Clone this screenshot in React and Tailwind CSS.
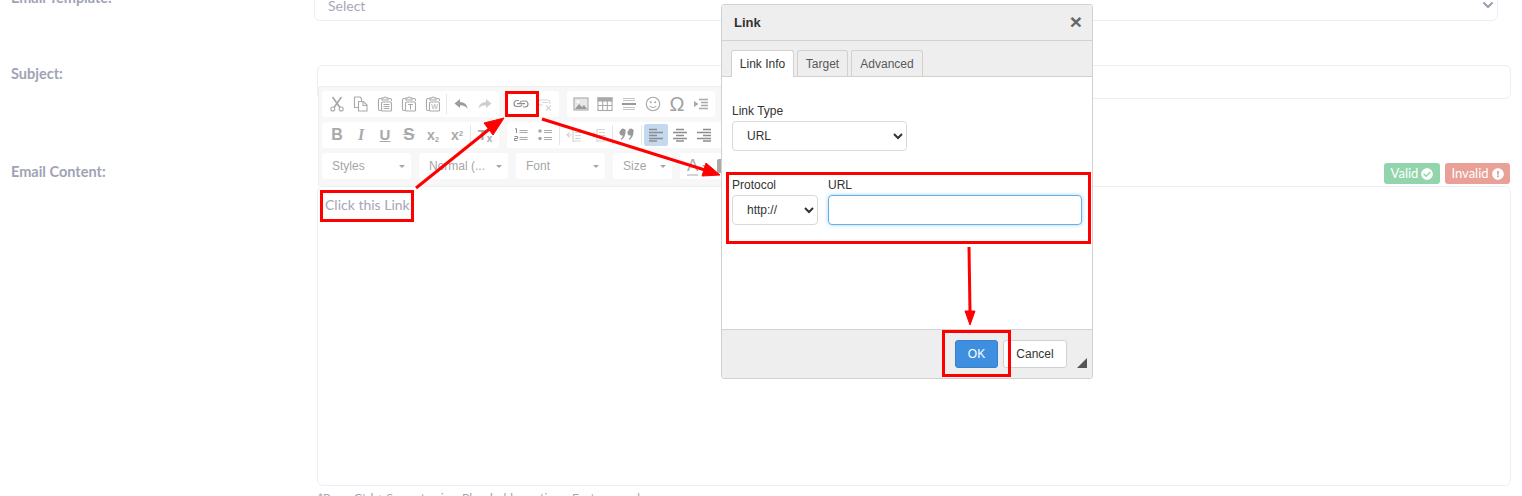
import { ChevronDown } from "lucide-react"
import { FaCheckCircle, FaExclamationCircle } from "react-icons/fa"

const ICON = "#a9a9a9"

function Svg({ children }) {
  return (
    <svg width="16" height="16" viewBox="0 0 16 16" fill="none" stroke={ICON} strokeWidth="1.1">
      {children}
    </svg>
  )
}

function Clipboard({ children }) {
  return (
    <Svg>
      <path d="M4.5 2.500H3a1.500 1.500 0 0 0-1.500 1.500v9A1.500 1.500 0 0 0 3 14.500h1" />
      <path d="M11.500 2.500H13A1.500 1.500 0 0 1 14.500 4v1" />
      <path d="M5 4V2h1.700a1.300 1 0 0 1 2.600 0H11v2z" fill="#fff" />
      <rect x="4.500" y="6" width="10" height="9" fill="#fff" rx="1" />
      {children}
    </Svg>
  )
}

const icons = {
  cut: (
    <Svg>
      <path d="M3.500 1l7.500 10.500M12.500 1L5 11.500" strokeWidth="1.700" />
      <circle cx="3.800" cy="13" r="2" />
      <circle cx="12.200" cy="13" r="2" />
    </Svg>
  ),
  copy: (
    <Svg>
      <path d="M5.500 11.500H1.500V1h5.500l1.500 1.500V5" />
      <path d="M5.500 5.500h5l3.500 3.500v6H5.500z" fill="#fff" />
      <path d="M10 5.500V9.500h4" />
    </Svg>
  ),
  paste: (
    <Clipboard>
      <path d="M6.500 8.500h6M6.500 10.500h6M6.500 12.500h6" />
    </Clipboard>
  ),
  pasteText: (
    <Clipboard>
      <path d="M7 8.500h5M9.500 8.500v5" />
    </Clipboard>
  ),
  pasteWord: (
    <Clipboard>
      <text x="9.500" y="13.300" textAnchor="middle" fontSize="7" fontFamily="Liberation Sans, sans-serif" fill={ICON} stroke="none">W</text>
    </Clipboard>
  ),
  undo: (
    <Svg>
      <path d="M7 3L1.500 7.500 7 12V9.200c3 0 5.500.6 7.500 3.300C14 8.500 11.500 6.300 7 6z" fill="#9c9c9c" stroke="none" />
    </Svg>
  ),
  redo: (
    <Svg>
      <path d="M9 3l5.500 4.500L9 12V9.200c-3 0-5.500.6-7.500 3.300C2 8.500 4.500 6.300 9 6z" fill="#cfcfcf" stroke="none" />
    </Svg>
  ),
  link: (
    <svg width="16" height="16" viewBox="0 0 16 16" fill="none" stroke="#8f8f8f" strokeWidth="1.200">
      <path d="M6 4.500H4a3 3 0 0 0 0 6h2.500a3 3 0 0 0 2.700-1.700" />
      <path d="M10 11h2a3 3 0 0 0 0-6H9.500a3 3 0 0 0-2.700 1.700" />
      <path d="M4 7.700h8" />
    </svg>
  ),
  unlink: (
    <svg width="16" height="16" viewBox="0 0 16 16" fill="none" stroke="#d8d8d8" strokeWidth="1.200">
      <path d="M6 9H3.500a2.500 2.500 0 0 1 0-5h7a2.500 2.500 0 0 1 2 4M5 6.500h6" />
      <path d="M9 9.500l5 5M14 9.500l-5 5" strokeWidth="1.500" />
    </svg>
  ),
  image: (
    <Svg>
      <rect x="1" y="2" width="14" height="12" fill="#e8e8e8" stroke="#a9a9a9" />
      <path d="M2 13l4-5 3 3 2-2 3 4z" fill="#9a9a9a" stroke="none" />
      <circle cx="5" cy="5.500" r="1.300" fill="#fff" stroke="none" />
    </Svg>
  ),
  table: (
    <Svg>
      <rect x="1" y="2" width="14" height="12.500" />
      <rect x="1" y="2" width="14" height="3" fill={ICON} />
      <path d="M1 9.500h14M5.700 5v9.500M10.300 5v9.500" />
    </Svg>
  ),
  hr: (
    <Svg>
      <path d="M2 2.500h12M2 4.500h12M2 11.500h12M2 13.500h12" stroke="#c4c4c4" />
      <path d="M1 8h14" strokeWidth="2" stroke="#999" />
    </Svg>
  ),
  smile: (
    <Svg>
      <circle cx="8" cy="8" r="6.700" />
      <circle cx="5.800" cy="6.300" r="1" fill={ICON} stroke="none" />
      <circle cx="10.200" cy="6.300" r="1" fill={ICON} stroke="none" />
      <path d="M4.800 10c1.500 2 4.900 2 6.400 0" />
    </Svg>
  ),
  block: (
    <Svg>
      <path d="M1 5l4.500 3L1 11z" fill={ICON} stroke="none" />
      <path d="M6 3.500h9M8 6.500h7M8 9.500h7M6 12.500h9" strokeWidth="1.500" />
    </Svg>
  ),
  numbered: (
    <Svg>
      <path d="M6.500 3.500h8M6.500 5.500h8M6.500 10.500h8M6.500 12.500h8" />
      <path d="M2 2l1.500-.5V6M1.500 9.500h3v2h-3v2h3" strokeWidth="1" stroke="#8f8f8f" />
    </Svg>
  ),
  bullets: (
    <Svg>
      <circle cx="3" cy="4" r="1.800" fill={ICON} stroke="none" />
      <circle cx="3" cy="11.500" r="1.800" fill={ICON} stroke="none" />
      <path d="M7 3.500h8M7 5.500h8M7 10.500h8M7 12.500h8" />
    </Svg>
  ),
  outdent: (
    <svg width="16" height="16" viewBox="0 0 16 16" fill="none" stroke="#d6d6d6" strokeWidth="1.200">
      <path d="M7 2.500h8M9 5.500h6M9 8.500h6M9 11.500h6M7 14h8M7 2v13M5.500 8H1M3.500 5.500L1 8l2.500 2.500" />
    </svg>
  ),
  indent: (
    <svg width="16" height="16" viewBox="0 0 16 16" fill="none" stroke="#d6d6d6" strokeWidth="1.200">
      <path d="M7 2.500h8M9 5.500h6M9 8.500h6M9 11.500h6M7 14h8M7 2v13M1 8h4.500M3 5.500L5.500 8 3 10.500" />
    </svg>
  ),
  quote: (
    <Svg>
      <path d="M1.500 3.500a2.600 2.600 0 0 1 5 1.500c0 3.500-1.800 6.500-4 8l-.8-1c1.200-1 2-2.200 2.200-3.600a2.800 2.800 0 0 1-2.400-4.900zM9.500 3.500a2.600 2.600 0 0 1 5 1.500c0 3.500-1.800 6.500-4 8l-.8-1c1.200-1 2-2.200 2.200-3.600a2.800 2.800 0 0 1-2.400-4.900z" fill="#999" stroke="none" />
    </Svg>
  ),
}

function Lines({ d }) {
  return (
    <svg width="16" height="16" viewBox="0 0 16 16" fill="none" stroke="#8d8d8d" strokeWidth="1.300">
      <path d={d} />
    </svg>
  )
}

icons.alignLeft = <Lines d="M1 2.500h8M1 5.500h14M1 8.500h8M1 11.500h14M1 14h8" />
icons.alignCenter = <Lines d="M4 2.500h8M1 5.500h14M4 8.500h8M1 11.500h14M4 14h8" />
icons.alignRight = <Lines d="M7 2.500h8M1 5.500h14M7 8.500h8M1 11.500h14M7 14h8" />

function Btn({ children, active }) {
  return (
    <div className={`flex h-[22px] w-6 shrink-0 items-center justify-center rounded-[2px] ${active ? "bg-[#c4d9ee]" : ""}`}>
      {children}
    </div>
  )
}

function Sep({ wide }) {
  return <div className={`h-[20px] w-px shrink-0 bg-[#e6e6e6] ${wide ? "mx-[2px]" : "ml-[1px] mr-[2px]"}`} />
}

function Group({ children, className = "" }) {
  return <div className={`flex h-[26px] shrink-0 items-center rounded-[3px] bg-white px-[3px] ${className}`}>{children}</div>
}

function Combo({ label, width, className = "" }) {
  return (
    <div className={`flex h-[26px] shrink-0 items-center justify-between rounded-[3px] bg-white pl-[10px] pr-[6px] text-[12px] text-[#a6a6a6] ${width} ${className}`}>
      <span>{label}</span>
      <span className="h-0 w-0 border-x-[3px] border-t-[3px] border-x-transparent border-t-[#a6a6a6]" />
    </div>
  )
}

function Toolbar() {
  return (
    <div className="absolute left-[318px] top-[86px] flex h-[100px] w-[404px] flex-col gap-[5px] overflow-hidden rounded-tl-[3px] border-l border-t border-[#eeeeee] bg-[#f7f7f7] pl-[3px] pt-[4px] font-['Liberation_Sans',sans-serif]">
      <div className="flex">
        <Group className="w-[177px]">
          <Btn>{icons.cut}</Btn>
          <Btn>{icons.copy}</Btn>
          <Btn>{icons.paste}</Btn>
          <Btn>{icons.pasteText}</Btn>
          <Btn>{icons.pasteWord}</Btn>
          <Sep />
          <Btn>{icons.undo}</Btn>
          <Btn>{icons.redo}</Btn>
        </Group>
        <Group className="ml-[7px] w-[53px]">
          <Btn>{icons.link}</Btn>
          <Btn>{icons.unlink}</Btn>
        </Group>
        <Group className="ml-[8px] w-[148px] pl-[2px]">
          <Btn>{icons.image}</Btn>
          <Btn>{icons.table}</Btn>
          <Btn>{icons.hr}</Btn>
          <Btn>{icons.smile}</Btn>
          <Btn><span className="text-[20px] leading-none text-[#a0a0a0]">Ω</span></Btn>
          <Btn>{icons.block}</Btn>
        </Group>
      </div>
      <div className="flex">
        <Group className="w-[177px] text-[#a9a9a9]">
          <Btn><span className="text-[16px] font-bold">B</span></Btn>
          <Btn><span className="font-['Liberation_Serif',serif] text-[16px] font-bold italic">I</span></Btn>
          <Btn><span className="text-[15px] font-bold underline">U</span></Btn>
          <Btn><span className="text-[17px] font-bold line-through">S</span></Btn>
          <Btn><span className="text-[14px] font-bold">x<sub className="text-[8px]">2</sub></span></Btn>
          <Btn><span className="text-[14px] font-bold">x<sup className="text-[8px]">2</sup></span></Btn>
          <Sep />
          <Btn><span className="text-[15px] font-bold">T<sub className="text-[10px]">x</sub></span></Btn>
        </Group>
        <Group className="ml-[8px] w-[220px] pl-[2px]">
          <Btn>{icons.numbered}</Btn>
          <Btn>{icons.bullets}</Btn>
          <Sep wide />
          <Btn>{icons.outdent}</Btn>
          <Btn>{icons.indent}</Btn>
          <Sep wide />
          <Btn>{icons.quote}</Btn>
          <Sep wide />
          <Btn active>{icons.alignLeft}</Btn>
          <Btn>{icons.alignCenter}</Btn>
          <Btn>{icons.alignRight}</Btn>
        </Group>
      </div>
      <div className="flex">
        <Combo label="Styles" width="w-[89px]" />
        <Combo label="Normal (..." width="w-[89px]" className="ml-[8px]" />
        <Combo label="Font" width="w-[89px]" className="ml-[8px]" />
        <Combo label="Size" width="w-[59px]" className="ml-[8px]" />
        <Group className="ml-[8px] w-[60px] pl-[7px]">
          <span className="border-b-2 border-[#d4d4d4] text-[17px] leading-[17px] text-[#a9a9a9]">A</span>
          <span className="ml-[4px] h-0 w-0 border-x-[3px] border-t-[3px] border-x-transparent border-t-[#a6a6a6]" />
          <span className="ml-[9px] h-[14px] w-[6px] rounded-[2px] bg-[#a9a9a9]" />
        </Group>
      </div>
    </div>
  )
}

function NativeSelect({ value, className }) {
  return (
    <select
      defaultValue={value}
      className={`h-[30px] rounded-[4px] border border-[#d9d9d9] bg-white pl-[10px] pr-[4px] text-[12px] text-[#333] ${className}`}
    >
      <option>{value}</option>
    </select>
  )
}

function LinkDialog() {
  return (
    <div className="absolute left-[721px] top-[4px] flex h-[375px] w-[372px] flex-col overflow-hidden rounded-[3px] border border-[#d1d1d1] bg-white font-['Liberation_Sans',sans-serif] text-[12px] text-[#333]">
      <div className="flex h-[36px] shrink-0 items-center justify-between border-b border-[#d1d1d1] bg-[#eeeeee] pl-[12px] pr-[10px]">
        <span className="text-[13px] font-bold text-[#333]">Link</span>
        <span className="mb-[2px] text-[21px] font-bold leading-none text-[#666]">×</span>
      </div>
      <div className="flex h-[36px] shrink-0 items-end gap-[3px] border-b border-[#d1d1d1] bg-[#eeeeee] pl-[9px]">
        <div className="-mb-px flex h-[27px] w-[63px] items-center justify-center rounded-t-[3px] border border-b-0 border-[#d1d1d1] bg-white">Link Info</div>
        <div className="flex h-[26px] w-[51px] items-center justify-center rounded-t-[3px] border border-b-0 border-[#d1d1d1] text-[#595959]">Target</div>
        <div className="flex h-[26px] w-[72px] items-center justify-center rounded-t-[3px] border border-b-0 border-[#d1d1d1] text-[#595959]">Advanced</div>
      </div>
      <div className="flex-1 pl-[10px] pt-[27px]">
        <div className="leading-[14px]">Link Type</div>
        <NativeSelect value="URL" className="mt-[3px] block w-[175px]" />
        <div className="mt-[27px] flex gap-[10px]">
          <div>
            <div className="leading-[14px]">Protocol</div>
            <NativeSelect value="http://" className="mt-[3px] block w-[86px]" />
          </div>
          <div>
            <div className="leading-[14px]">URL</div>
            <input
              type="text"
              className="mt-[3px] block h-[30px] w-[254px] rounded-[4px] border border-[#66aee8] bg-white shadow-[0_0_4px_#a8d4f5] outline-none"
            />
          </div>
        </div>
      </div>
      <div className="relative flex h-[49px] shrink-0 items-start border-t border-[#d1d1d1] bg-[#eeeeee] pl-[233px] pt-[10px]">
        <button className="h-[28px] w-[43px] rounded-[3px] border border-[#3a7fcc] bg-[#3f8fe0] text-white">OK</button>
        <button className="ml-[5px] h-[28px] w-[64px] rounded-[3px] border border-[#d1d1d1] bg-white text-[#333]">Cancel</button>
        <span className="absolute bottom-[10px] right-[5px] h-0 w-0 border-b-[10px] border-l-[10px] border-b-[#555] border-l-transparent" />
      </div>
    </div>
  )
}

function Marks() {
  return (
    <>
      <div className="absolute left-[320px] top-[190px] h-[32px] w-[94px] border-[3px] border-[#f00]" />
      <div className="absolute left-[505px] top-[91px] h-[26px] w-[34px] border-[3px] border-[#f00]" />
      <div className="absolute left-[726px] top-[172px] h-[72px] w-[365px] border-[3px] border-[#f00]" />
      <div className="absolute left-[942px] top-[330px] h-[47px] w-[69px] border-[3px] border-[#f00]" />
      <svg className="pointer-events-none absolute left-0 top-0" width="1522" height="496" fill="none" stroke="#f00" strokeWidth="3">
        <path d="M416 188L492 127" />
        <path d="M504 118L484 123L493 135z" fill="#f00" strokeWidth="1" />
        <path d="M542 119L705 170" />
        <path d="M720 175L702 176L706 163z" fill="#f00" strokeWidth="1" />
        <path d="M969 247L970 312" />
        <path d="M970 325L965 311L975 311z" fill="#f00" strokeWidth="1" />
      </svg>
    </>
  )
}

export default function App() {
  return (
    <div className="relative h-[496px] w-[1522px] overflow-hidden bg-white font-['Lato',sans-serif] text-[14px] text-[#a0a3b5]">
      <div className="-mt-[11px] flex h-[32px] items-start pl-[11px]">
        <div className="-mt-[2px] w-[303px] text-[14.5px] font-bold">Email Template:</div>
        <div className="flex h-[32px] w-[1184px] items-center justify-between rounded-md border border-[#eceef5] pl-[13px] pr-[1px]">
          <span className="text-[#a8a8b8]">Select</span>
          <ChevronDown size={16} strokeWidth={3} className="text-[#9a9db0]" />
        </div>
      </div>

      <div className="mt-[44px] flex pl-[11px]">
        <div className="-mt-[2px] w-[306px] text-[14.5px] font-bold">Subject:</div>
        <div className="h-[34px] w-[1194px] rounded-md border border-[#eceef5]" />
      </div>

      <div className="mt-[64px] flex items-start pl-[11px]">
        <div className="-mt-[2px] w-[306px] text-[14.5px] font-bold">Email Content:</div>
        <div className="w-[1194px]">
          <div className="flex h-[23px] items-start justify-end gap-[5px] pr-[1px] text-[13px] text-white">
            <span className="flex h-[21px] w-[56px] items-center justify-center gap-[3px] rounded-[3px] bg-[#92d5ac]">
              Valid <FaCheckCircle size={12} />
            </span>
            <span className="flex h-[21px] w-[65px] items-center justify-center gap-[3px] rounded-[3px] bg-[#e8a097]">
              Invalid <FaExclamationCircle size={12} />
            </span>
          </div>
          <div className="h-[300px] rounded-md border border-[#eceef5] pl-[7px] pt-[7px] text-[#a5a5ba]">
            Click this Link
          </div>
          <div className="mt-[3px] pl-[1px] text-[12px]">*Press Ctrl + Space to view Placeholder options. Feature used</div>
        </div>
      </div>

      <Toolbar />
      <LinkDialog />
      <Marks />
    </div>
  )
}
